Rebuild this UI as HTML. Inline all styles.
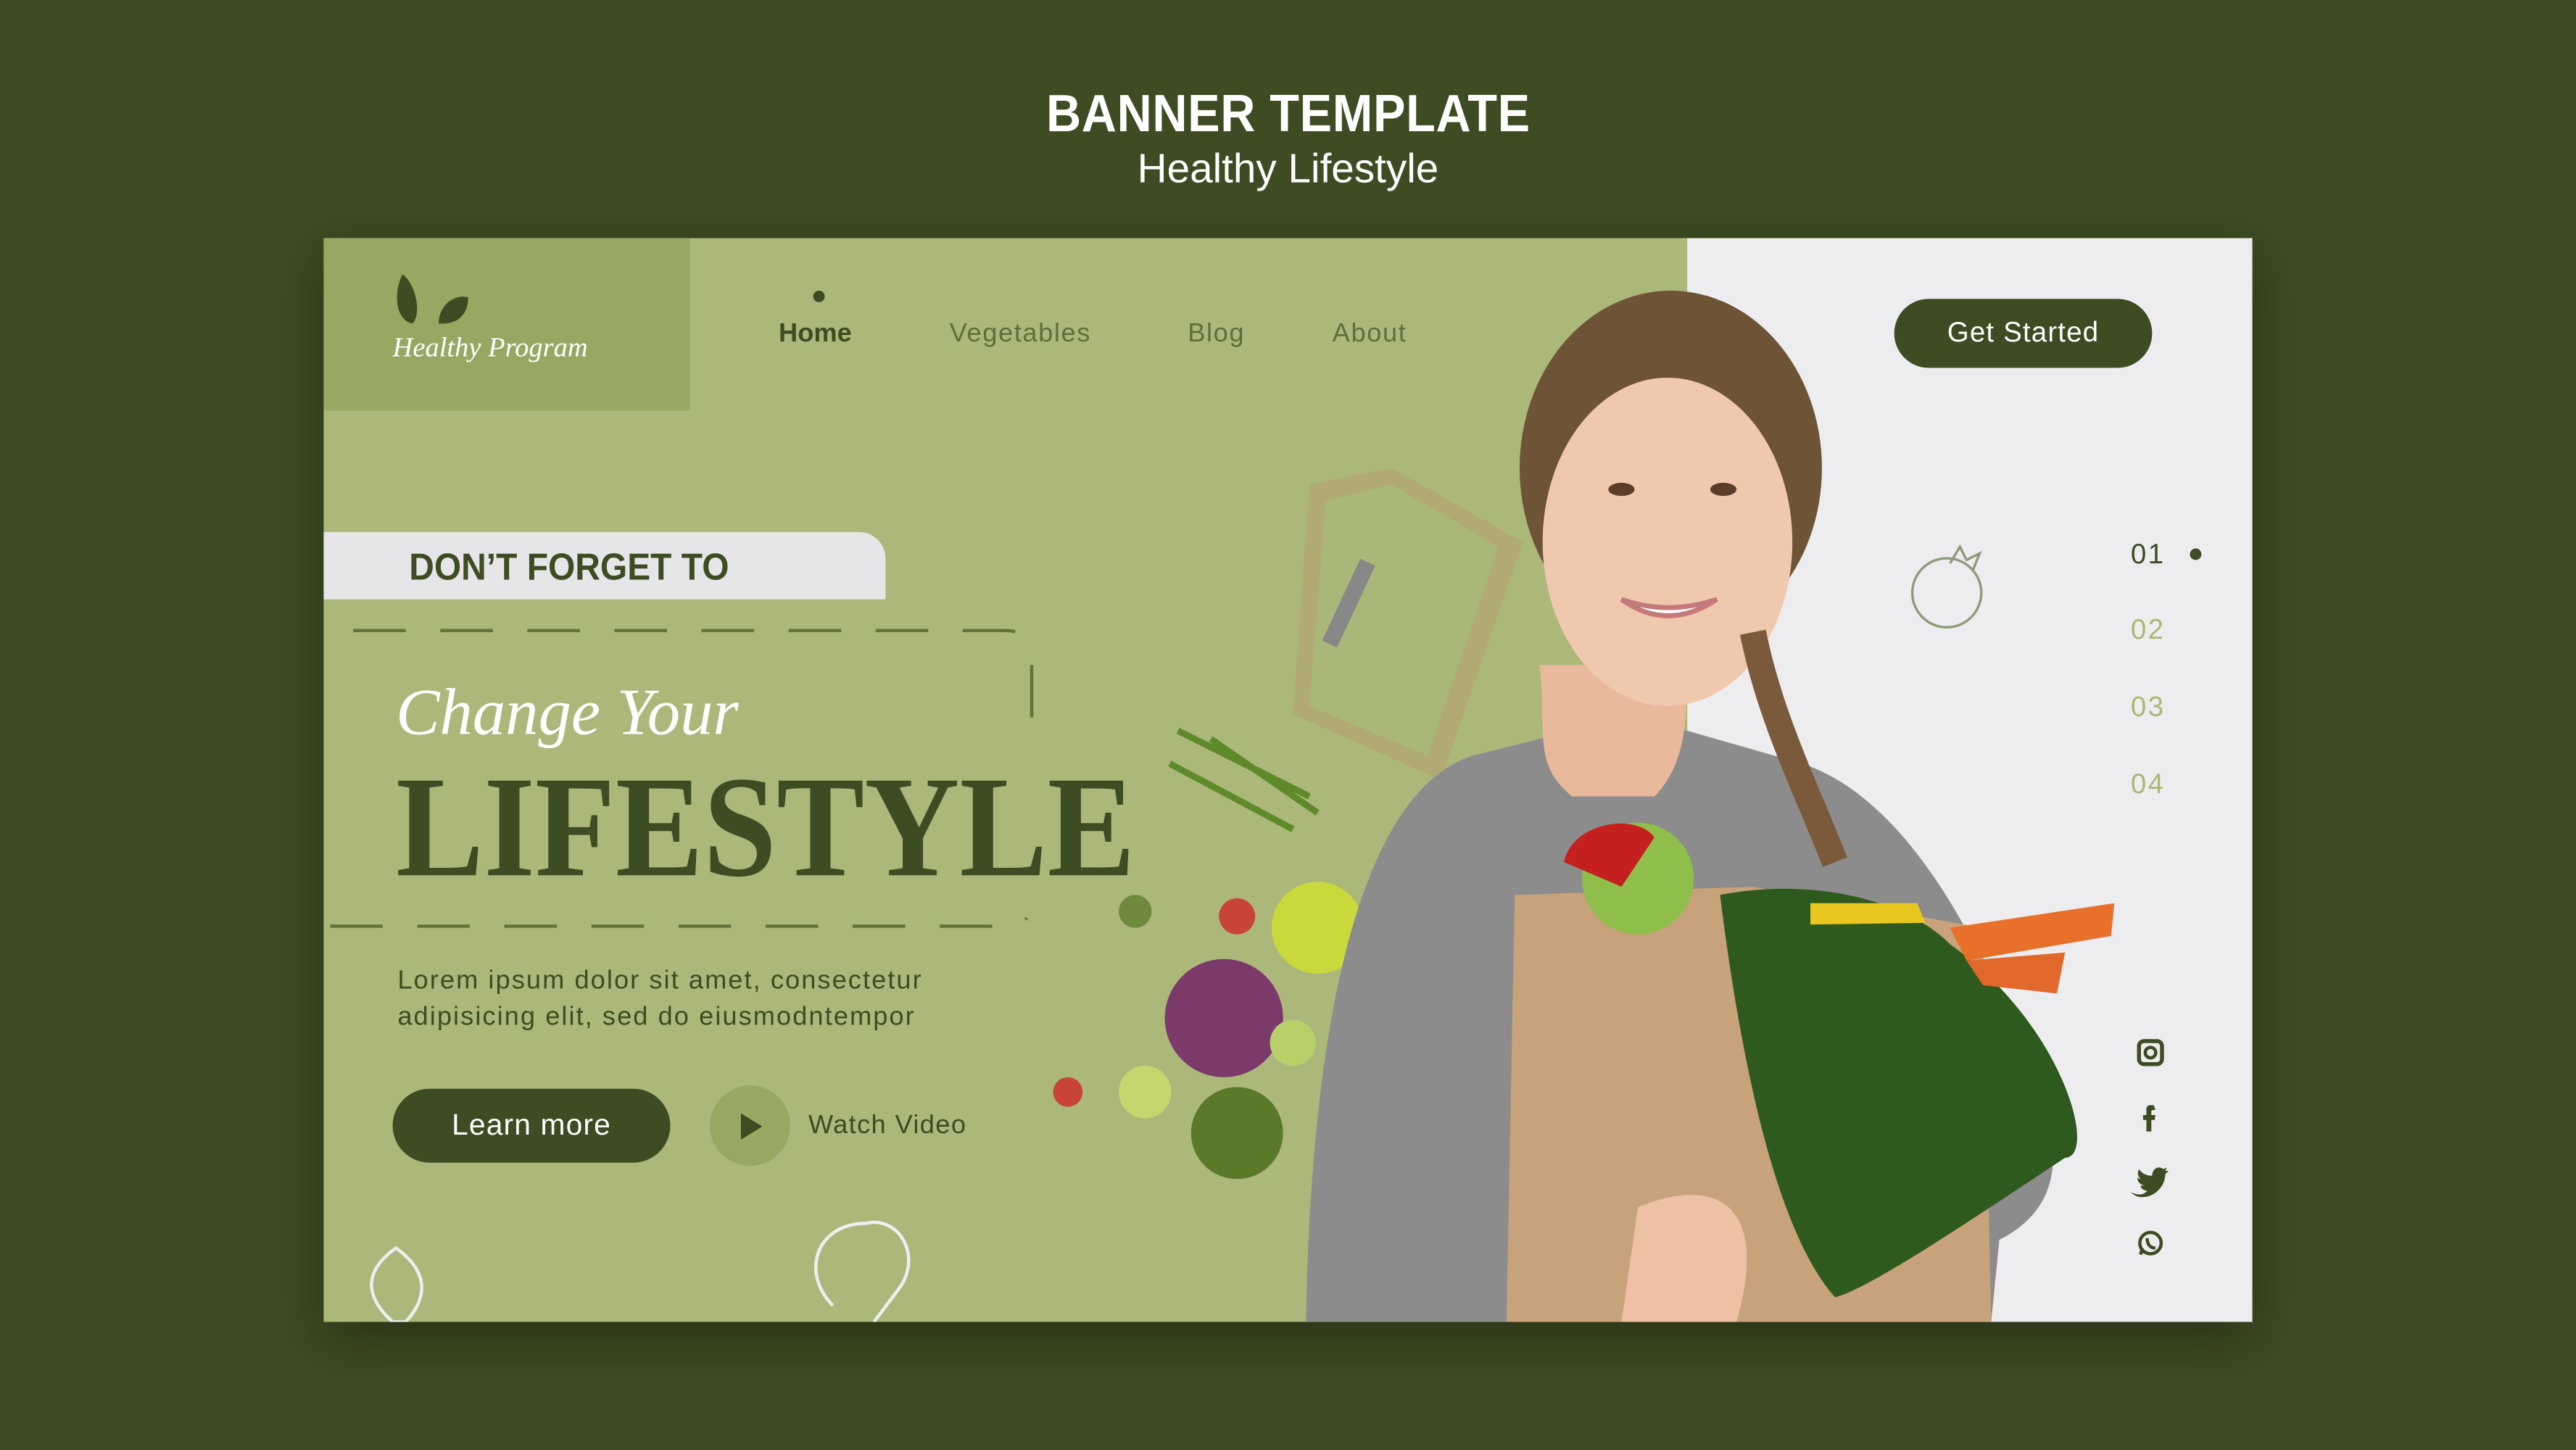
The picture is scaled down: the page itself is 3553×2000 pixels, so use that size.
<!DOCTYPE html>
<html><head><meta charset="utf-8"><style>
html,body{margin:0;padding:0;background:#3d4c22;width:3553px;height:2000px;overflow:hidden}
#s{position:absolute;left:0;top:0;width:1568px;height:883px;transform:scale(2.26594,2.26501);transform-origin:0 0;font-family:"Liberation Sans",sans-serif}
.a{position:absolute}
</style></head><body><div id="s">
<div class="a" style="left:0;top:51px;width:1568px;text-align:center;color:#fff;font-size:32px;font-weight:bold;letter-spacing:0.3px"><span style="display:inline-block;transform:scaleX(.92)">BANNER TEMPLATE</span></div>
<div class="a" style="left:0;top:89px;width:1568px;text-align:center;color:#fff;font-size:25px">Healthy Lifestyle</div>
<div class="a" style="left:197px;top:145px;width:1174px;height:660px;background:#abb87a;overflow:hidden;box-shadow:0 10px 30px rgba(0,0,0,.35)">
 <div class="a" style="left:830px;top:0;width:344px;height:660px;background:#ededf0"></div>
 <div class="a" style="left:0;top:0;width:223px;height:105px;background:#97a862"></div>
 <svg class="a" style="left:40px;top:20px" width="160" height="70"><path d="M8 2 C2 14 4 30 14 32 C20 26 16 8 8 2Z" fill="#3d4c22"/><path d="M48 16 C38 14 30 22 30 32 C42 33 48 26 48 16Z" fill="#3d4c22"/><text x="2" y="52" font-family="Liberation Serif,serif" font-style="italic" font-size="17" fill="#fff">Healthy Program</text></svg>
 <div class="a" style="left:298px;top:32px;width:7px;height:7px;border-radius:50%;background:#3d4c22"></div>
 <div class="a" style="left:277px;top:50px;font-size:16px;font-weight:bold;color:#3d4c22">Home</div>
 <div class="a" style="left:381px;top:50px;font-size:16px;color:#5f6e3a;letter-spacing:.7px">Vegetables</div>
 <div class="a" style="left:526px;top:50px;font-size:16px;color:#5f6e3a;letter-spacing:.7px">Blog</div>
 <div class="a" style="left:614px;top:50px;font-size:16px;color:#5f6e3a;letter-spacing:.7px">About</div>
 <div class="a" style="left:956px;top:37px;width:157px;height:42px;border-radius:21px;background:#3d4c22;color:#fff;font-size:17px;line-height:42px;text-align:center;letter-spacing:.5px">Get Started</div>
 <div class="a" style="left:0;top:179px;width:342px;height:41px;background:#e6e6e8;border-radius:0 16px 0 0"></div>
 <div class="a" style="left:52px;top:187px;font-size:23px;font-weight:bold;color:#3d4c22;transform:scaleX(.92);transform-origin:0 0">DON’T FORGET TO</div>
 <svg class="a" style="left:0;top:230px" width="440" height="200"><path d="M18 9 H415 Q428 9 430 18" stroke="#63733a" stroke-width="2" fill="none" stroke-dasharray="32 21"/><path d="M431 30 V62" stroke="#63733a" stroke-width="2"/><path d="M4 189 H413 Q424 189 428 184" stroke="#63733a" stroke-width="2" fill="none" stroke-dasharray="32 21"/></svg>
 <div class="a" style="left:44px;top:265px;font-family:'Liberation Serif',serif;font-style:italic;font-size:40px;color:#fff">Change Your</div>
 <svg class="a" style="left:42px;top:312px" width="460" height="80"><text x="2" y="76" textLength="450" lengthAdjust="spacingAndGlyphs" font-family="Liberation Serif,serif" font-weight="bold" font-size="88" fill="#3d4c22">LIFESTYLE</text></svg>
 <div class="a" style="left:45px;top:442px;font-size:16px;line-height:22px;color:#3d4c22;letter-spacing:.9px">Lorem ipsum dolor sit amet, consectetur<br>adipisicing elit, sed do eiusmodntempor</div>
 <div class="a" style="left:42px;top:518px;width:169px;height:45px;border-radius:23px;background:#3d4c22;color:#fff;font-size:18px;line-height:45px;text-align:center;letter-spacing:.5px">Learn more</div>
 <div class="a" style="left:235px;top:516px;width:49px;height:49px;border-radius:50%;background:#97a862"></div>
 <div class="a" style="left:254px;top:533px;width:0;height:0;border-left:13px solid #3d4c22;border-top:8px solid transparent;border-bottom:8px solid transparent"></div>
 <div class="a" style="left:295px;top:532px;font-size:16px;color:#3d4c22;letter-spacing:.6px">Watch Video</div>
 <svg class="a" style="left:0;top:0" width="1174" height="660">
  <path d="M600 150 L650 140 L730 185 L680 330 L590 290Z" fill="#b8a070" opacity=".6"/>
  <path d="M610 160 L650 150 L715 188 L672 315 L600 285Z" fill="#a9b879"/>
  <rect x="620" y="195" width="10" height="55" fill="#888" transform="rotate(25 625 220)"/>
  <path d="M520 300 L600 340 M540 305 L605 350 M515 320 L590 360" stroke="#5e8a2a" stroke-width="4"/>
  <circle cx="605" cy="420" r="28" fill="#c9d83a"/>
  <circle cx="548" cy="475" r="36" fill="#7b3a6a"/>
  <circle cx="556" cy="545" r="28" fill="#5a7a2a"/>
  <circle cx="500" cy="520" r="16" fill="#c6d66e"/>
  <circle cx="556" cy="413" r="11" fill="#c8443a"/>
  <circle cx="494" cy="410" r="10" fill="#6f8a3a"/>
  <circle cx="453" cy="520" r="9" fill="#c8443a"/>
  <circle cx="590" cy="490" r="14" fill="#b8d06a"/>
  <path d="M42 660 C20 640 30 625 44 615 C58 625 68 640 50 660Z" fill="none" stroke="#eee" stroke-width="2"/>
  <path d="M310 650 C290 630 300 600 330 600 C350 595 365 620 350 640 L335 660" fill="none" stroke="#eee" stroke-width="2"/>
  <path d="M598 660 C600 520 620 340 700 315 L760 300 L830 300 L900 320 C960 340 1010 420 1050 540 C1060 580 1040 600 1020 610 L1015 660Z" fill="#8c8c8c"/>
  <path d="M740 260 C745 300 735 320 760 340 L810 340 C830 320 830 290 830 260Z" fill="#e8b99a"/>
  <ellipse cx="820" cy="140" rx="92" ry="108" fill="#6e5436"/>
  <ellipse cx="818" cy="185" rx="76" ry="100" fill="#f0c8ad"/>
  <path d="M740 140 C745 70 790 50 820 50 C870 50 900 80 903 140 C880 90 850 80 820 82 C790 82 760 95 740 140Z" fill="#6e5436"/>
  <path d="M870 240 C880 290 900 330 920 380" stroke="#7a5a3a" stroke-width="16" fill="none"/>
  <path d="M790 220 Q818 240 848 220 Q818 230 790 220Z" fill="#fff" stroke="#c47a7a" stroke-width="3"/>
  <ellipse cx="790" cy="153" rx="8" ry="4" fill="#5a3e2a"/><ellipse cx="852" cy="153" rx="8" ry="4" fill="#5a3e2a"/>
  <path d="M725 400 L870 395 L1010 420 L1015 660 L720 660Z" fill="#c7a27a"/>
  <circle cx="800" cy="390" r="34" fill="#8fbf4a"/>
  <path d="M755 380 C760 355 800 350 810 365 L790 395Z" fill="#c42020"/>
  <path d="M850 400 C900 390 960 400 990 430 C1060 480 1080 560 1060 560 C1000 600 940 640 920 645 C880 600 860 480 850 400Z" fill="#2f5a1e"/>
  <path d="M990 420 L1090 405 L1088 425 L1000 440Z" fill="#e8702a"/>
  <path d="M1000 440 L1060 435 L1055 460 L1010 455Z" fill="#e0682a"/>
  <path d="M905 405 L970 405 L975 417 L905 418Z" fill="#e8c820"/>
  <path d="M800 590 C850 570 880 590 860 660 L790 660Z" fill="#eec0a4"/>
  <circle cx="988" cy="216" r="21" fill="none" stroke="#8f9b77" stroke-width="1.5"/>
  <path d="M990 198 L996 188 L1000 196 L1008 192 L1004 202" fill="none" stroke="#8f9b77" stroke-width="1.5"/>
 </svg>
 <div class="a" style="left:1100px;top:183px;font-size:17px;color:#3d4c22;letter-spacing:1px">01</div>
 <div class="a" style="left:1136px;top:189px;width:7px;height:7px;border-radius:50%;background:#3d4c22"></div>
 <div class="a" style="left:1100px;top:229px;font-size:17px;color:#a9b872;letter-spacing:1px">02</div>
 <div class="a" style="left:1100px;top:276px;font-size:17px;color:#a9b872;letter-spacing:1px">03</div>
 <div class="a" style="left:1100px;top:323px;font-size:17px;color:#a9b872;letter-spacing:1px">04</div>
 <svg class="a" style="left:1100px;top:485px" width="26" height="140">
  <rect x="5" y="4" width="14" height="14" rx="3" fill="none" stroke="#3d4c22" stroke-width="2.4"/><circle cx="12" cy="11" r="3.2" fill="none" stroke="#3d4c22" stroke-width="2"/>
  <path d="M14 43 H12 C10 43 9.5 44 9.5 46 V49 H7.5 V52 H9.5 V59 H12.5 V52 H14.5 L15 49 H12.5 V47 C12.5 46.3 12.8 46 13.5 46 H15Z" fill="#3d4c22"/>
  <path d="M0 96 C4 98 8 98 10 95 C7 95 6 93 6 92 C7 92 8 92 8 92 C5 91 4 89 4 87 C5 88 6 88 6 88 C4 86 4 84 5 82 C7 85 10 86 13 86 C13 83 15 81 17 81 C19 81 20 82 20 82 L22 81 L21 83 L23 83 L21 85 C21 92 15 99 7 99 C4 99 2 98 0 96Z" fill="#3d4c22"/>
  <circle cx="12" cy="127" r="6.5" fill="none" stroke="#3d4c22" stroke-width="2"/><path d="M6 134 L7 130" stroke="#3d4c22" stroke-width="2"/><path d="M10 124 C10 128 12 130 15 130" stroke="#3d4c22" stroke-width="2" fill="none"/>
 </svg>
</div>
</div></body></html>
